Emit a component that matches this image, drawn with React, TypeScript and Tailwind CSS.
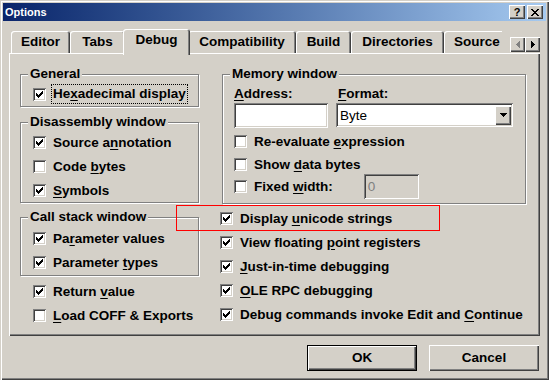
import React from 'react';

// Win2000 style 3D edges
const RAISED = 'shadow-[inset_1px_1px_0_#fff,inset_-1px_-1px_0_#404040,inset_-2px_-2px_0_#808080]';
const SUNKEN = 'shadow-[inset_1px_1px_0_#808080,inset_-1px_-1px_0_#fff,inset_2px_2px_0_#404040,inset_-2px_-2px_0_#d4d0c8]';
const ETCHED = 'border border-[#808080] shadow-[inset_1px_1px_0_#fff,1px_1px_0_#fff]';

// "&x" marks the underlined mnemonic letter
function Mn({ t }: { t: string }) {
  const i = t.indexOf('&');
  if (i < 0) return <>{t}</>;
  return (
    <>
      {t.slice(0, i)}
      <u className="underline-offset-[2px]">{t[i + 1]}</u>
      {t.slice(i + 2)}
    </>
  );
}

function CheckMark() {
  // 7x7 pixel tick: each column is 3px tall
  const tops = [2, 3, 4, 3, 2, 1, 0];
  return (
    <svg width="7" height="7" viewBox="0 0 7 7" shapeRendering="crispEdges">
      {tops.map((y, x) => (
        <rect key={x} x={x} y={y} width="1" height="3" fill="#000" />
      ))}
    </svg>
  );
}

function Box({ checked }: { checked: boolean }) {
  return (
    <span className={`w-[13px] h-[13px] bg-white shrink-0 flex items-center justify-center ${SUNKEN}`}>
      {checked && <CheckMark />}
    </span>
  );
}

function Check({ label, checked, focus = false }: { label: string; checked: boolean; focus?: boolean }) {
  return (
    <div className="h-[20px] flex items-center gap-[7px]">
      <Box checked={checked} />
      {focus ? (
        <span className="-ml-[2px] px-[1px] py-[2px] border border-dotted border-black leading-[14px]">
          <Mn t={label} />
        </span>
      ) : (
        <span className="leading-[15px]">
          <Mn t={label} />
        </span>
      )}
    </div>
  );
}

function Group({ title, className, children }: { title: string; className: string; children?: React.ReactNode }) {
  return (
    <div className={`${ETCHED} flex flex-col ${className}`}>
      <span className="-mt-[9px] ml-[7px] px-[2px] bg-[#d4d0c8] self-start leading-[15px]">{title}</span>
      {children}
    </div>
  );
}

function Tab({ label, w, active = false }: { label: string; w: string; active?: boolean }) {
  return (
    <div
      className={`shrink-0 flex items-center justify-center rounded-t-[3px] bg-[#d4d0c8] shadow-[inset_1px_1px_0_#fff,inset_-1px_0_0_#404040,inset_-2px_0_0_#808080] ${w} ${
        active ? 'h-[26px] -mx-[2px] -mb-[2px] relative z-10 pb-[3px]' : 'h-[22px] pt-[1px]'
      }`}
    >
      {label}
    </div>
  );
}

function Arrow({ dir, disabled }: { dir: 'l' | 'r'; disabled?: boolean }) {
  return (
    <div className={`w-[15px] h-[15px] bg-[#d4d0c8] flex items-center justify-center ${RAISED}`}>
      <svg width="4" height="7" viewBox="0 0 4 7" shapeRendering="crispEdges">
        {dir === 'l' ? (
          <path d="M0 3h1V2h1V1h1V0h1v7H3V6H2V5H1V4H0z" fill={disabled ? '#808080' : '#000'} />
        ) : (
          <path d="M0 0h1v1h1v1h1v1h1v1H3v1H2v1H1v1H0z" fill="#000" />
        )}
      </svg>
    </div>
  );
}

export default function App() {
  return (
    <div className="w-[549px] h-[380px] relative bg-[#d4d0c8] p-[3px] flex flex-col font-['Liberation_Sans',Arial,sans-serif] font-bold text-[13.5px] text-black shadow-[inset_1px_1px_0_#d4d0c8,inset_2px_2px_0_#fff,inset_-1px_-1px_0_#404040,inset_-2px_-2px_0_#808080] overflow-hidden">
      {/* title bar */}
      <div className="h-[18px] flex items-center bg-linear-to-r from-[#0a246a] to-[#a6caf0] pl-[2px] pr-[3px]">
        <span className="text-white text-[11px] leading-[13px]">Options</span>
        <div className="ml-auto flex gap-[2px]">
          <div className={`w-[16px] h-[14px] bg-[#d4d0c8] flex items-center justify-center text-[11px] leading-[11px] ${RAISED}`}>?</div>
          <div className={`w-[16px] h-[14px] bg-[#d4d0c8] flex items-center justify-center ${RAISED}`}>
            <svg width="8" height="7" viewBox="0 0 8 7" shapeRendering="crispEdges">
              <path d="M0 0h2v1h1v1h2V1h1V0h2v1H7v1H6v1H5v1h1v1h1v1h1v1H6V6H5V5H3v1H2v1H0V6h1V5h1V4h1V3H2V2H1V1H0z" fill="#000" />
            </svg>
          </div>
        </div>
      </div>

      {/* tabs */}
      <div className="mt-[8px] ml-[8px] h-[24px] flex items-end relative z-10">
        <div className="w-[491px] h-[26px] -mb-[2px] flex items-start overflow-hidden">
          <div className="flex items-end h-[24px]">
            <Tab label="Editor" w="w-[59px]" />
            <Tab label="Tabs" w="w-[55px]" />
            <Tab label="Debug" w="w-[67px]" active />
            <Tab label="Compatibility" w="w-[108px]" />
            <Tab label="Build" w="w-[55px]" />
            <Tab label="Directories" w="w-[93px]" />
            <Tab label="Source" w="w-[66px]" />
          </div>
        </div>
        <div className="ml-[8px] mb-[1px] flex">
          <Arrow dir="l" disabled />
          <Arrow dir="r" />
        </div>
      </div>

      {/* tab panel */}
      <div className={`ml-[6px] w-[531px] h-[283px] pt-[21px] pl-[11px] flex gap-[21px] ${RAISED}`}>
        {/* left column */}
        <div className="w-[179px] flex flex-col">
          <Group title="General" className="h-[33px]">
            <div className="mt-[3px] pl-[12px]">
              <Check label="He&xadecimal display" checked focus />
            </div>
          </Group>
          <Group title="Disassembly window" className="mt-[15px] h-[81px]">
            <div className="mt-[3px] pl-[12px] flex flex-col gap-[4px]">
              <Check label="Source a&nnotation" checked />
              <Check label="Code &bytes" checked={false} />
              <Check label="&Symbols" checked />
            </div>
          </Group>
          <Group title="Call stack window" className="mt-[14px] h-[59px]">
            <div className="mt-[4px] pl-[12px] flex flex-col gap-[4px]">
              <Check label="Pa&rameter values" checked />
              <Check label="Parameter &types" checked />
            </div>
          </Group>
          <div className="mt-[5px] pl-[13px] flex flex-col gap-[4px]">
            <Check label="Return &value" checked />
            <Check label="&Load COFF & Exports" checked={false} />
          </div>
        </div>

        {/* right column */}
        <div className="flex flex-col">
          <Group title="Memory window" className="ml-[2px] w-[304px] h-[130px]">
            <div className="mt-[5px] pl-[11px] flex">
              <div className="w-[102px] flex flex-col">
                <span className="leading-[15px]"><Mn t="&Address:" /></span>
                <div className={`mt-[2px] w-[94px] h-[25px] bg-white ${SUNKEN}`} />
              </div>
              <div className="flex flex-col">
                <span className="leading-[15px] pl-[2px]"><Mn t="&Format:" /></span>
                <div className={`mt-[2px] w-[177px] h-[24px] bg-white flex items-center p-[2px] ${SUNKEN}`}>
                  <span className="font-normal pl-[2px] flex-1 leading-[15px]">Byte</span>
                  <div className={`w-[16px] h-[19px] bg-[#d4d0c8] flex items-center justify-center ${RAISED}`}>
                    <svg width="7" height="4" viewBox="0 0 7 4" shapeRendering="crispEdges">
                      <path d="M0 0h7v1H6v1H5v1H4v1H3V3H2V2H1V1H0z" fill="#000" />
                    </svg>
                  </div>
                </div>
              </div>
            </div>
            <div className="mt-[3px] pl-[11px] flex flex-col">
              <Check label="Re-evaluate &expression" checked={false} />
              <div className="mt-[3px]">
                <Check label="Show &data bytes" checked={false} />
              </div>
              <div className="h-[25px] flex items-center">
                <Check label="Fixed &width:" checked={false} />
                <div className={`ml-[31px] w-[55px] h-[25px] flex items-center pl-[4px] ${SUNKEN}`}>
                  <span className="font-normal text-[#808080] leading-[15px]">0</span>
                </div>
              </div>
            </div>
          </Group>
          <div className="mt-[4px] flex flex-col gap-[4px]">
            <Check label="Display &unicode strings" checked />
            <Check label="View floating &point registers" checked />
            <Check label="&Just-in-time debugging" checked />
            <Check label="&OLE RPC debugging" checked />
            <Check label="Debug commands invoke Edit and &Continue" checked />
          </div>
        </div>
      </div>

      {/* dialog buttons */}
      <div className="mt-[9px] flex justify-end gap-[12px] pr-[7px]">
        <div className="w-[110px] h-[26px] border border-black">
          <div className={`w-full h-full flex items-center justify-center ${RAISED}`}>OK</div>
        </div>
        <div className={`w-[110px] h-[26px] flex items-center justify-center ${RAISED}`}>Cancel</div>
      </div>

      {/* annotation box */}
      <div className="absolute left-[176px] top-[205px] w-[264px] h-[26px] border border-[#ff0000]" />
    </div>
  );
}
